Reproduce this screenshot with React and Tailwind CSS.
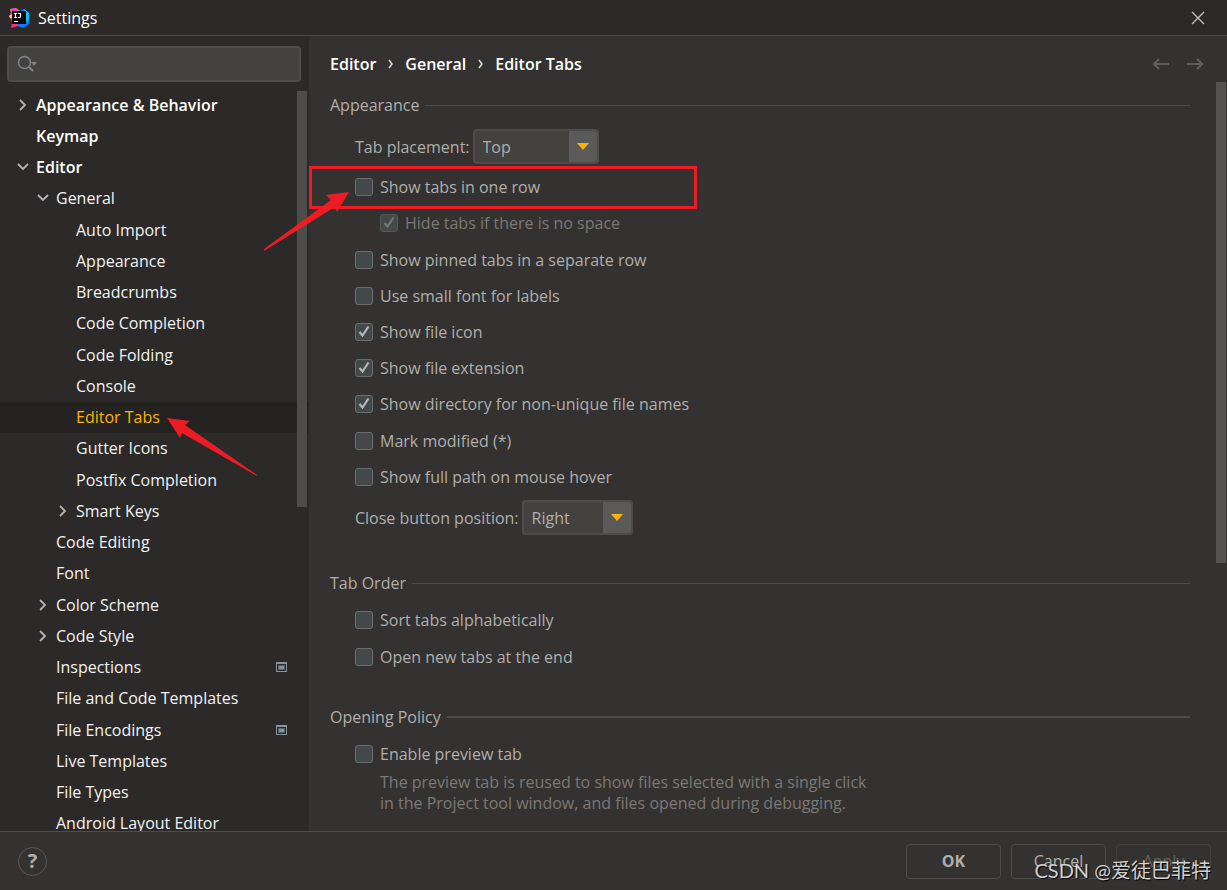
import React from 'react'

const tree = [
  { label: 'Appearance & Behavior', level: 0, arrow: 'right', bold: true },
  { label: 'Keymap', level: 0, bold: true },
  { label: 'Editor', level: 0, arrow: 'down', bold: true },
  { label: 'General', level: 1, arrow: 'down' },
  { label: 'Auto Import', level: 2 },
  { label: 'Appearance', level: 2 },
  { label: 'Breadcrumbs', level: 2 },
  { label: 'Code Completion', level: 2 },
  { label: 'Code Folding', level: 2 },
  { label: 'Console', level: 2 },
  { label: 'Editor Tabs', level: 2, active: true },
  { label: 'Gutter Icons', level: 2 },
  { label: 'Postfix Completion', level: 2 },
  { label: 'Smart Keys', level: 2, arrow: 'right' },
  { label: 'Code Editing', level: 1 },
  { label: 'Font', level: 1 },
  { label: 'Color Scheme', level: 1, arrow: 'right' },
  { label: 'Code Style', level: 1, arrow: 'right' },
  { label: 'Inspections', level: 1, project: true },
  { label: 'File and Code Templates', level: 1 },
  { label: 'File Encodings', level: 1, project: true },
  { label: 'Live Templates', level: 1 },
  { label: 'File Types', level: 1 },
  { label: 'Android Layout Editor', level: 1 },
]

const indent = ['pl-4', 'pl-9', 'pl-14']

const appearance = [
  { label: 'Show tabs in one row', marked: true },
  { label: 'Hide tabs if there is no space', checked: true, disabled: true },
  { label: 'Show pinned tabs in a separate row' },
  { label: 'Use small font for labels' },
  { label: 'Show file icon', checked: true },
  { label: 'Show file extension', checked: true },
  { label: 'Show directory for non-unique file names', checked: true },
  { label: 'Mark modified (*)' },
  { label: 'Show full path on mouse hover' },
]

const Logo = () => (
  <svg width="20" height="20" viewBox="0 0 20 20" aria-hidden="true">
    <path d="M1 1 7 0l4 3v6H0l2-4z" fill="#fd8a2b" />
    <path d="M0 8l3-4 3 8 5 5-5 2-4 1 1-6z" fill="#fe2b78" />
    <path d="M5 0l4 2-1 3H3l-1-3z" fill="#e93be0" />
    <path d="M10 3 15 1l5 4v11l-6 4-6-2z" fill="#087cfa" />
    <path d="M15 1l5 4v7l-4 2z" fill="#07c3f2" />
    <path d="M0 8l3-2v4H1z" fill="#ffd23c" />
    <rect x="3" y="3" width="14" height="13" fill="#0a0204" />
    <path d="M5 5.500h3M6.500 5.500v4M5 9.500h3M9 5.500h2.500v3q0 1-1.200 1H9M5 13.500h4" stroke="#fff" strokeWidth="1.200" fill="none" />
  </svg>
)

const Chevron = ({ dir }) => (
  <svg width="14" height="12" viewBox="0 0 14 12" fill="none" stroke="#b4b4b4" strokeWidth="1.800" aria-hidden="true">
    <path d={dir === 'down' ? 'M2 3l5 5 5-5' : 'M4 1l5 5-5 5'} />
  </svg>
)

const ProjectIcon = () => (
  <svg width="11" height="10" viewBox="0 0 11 10" className="mr-[22px]" aria-hidden="true">
    <path d="M0 0h11v10H0zM1 2v7h9V2z" fill="#87939a" fillRule="evenodd" />
    <rect x="2" y="3" width="7" height="5" fill="#596065" />
    <rect x="3" y="4" width="5" height="3" fill="#87939a" />
  </svg>
)

const TreeItem = ({ item }) => (
  <li className={`flex flex-1 items-center ${indent[item.level]} ${item.active ? 'bg-[#242321]' : ''}`}>
    <span className="flex w-5 shrink-0">{item.arrow && <Chevron dir={item.arrow} />}</span>
    <a
      href="#"
      className={`flex-1 whitespace-nowrap ${item.bold ? 'font-semibold text-white' : ''} ${item.active ? 'text-[#ffb300]' : ''}`}
    >
      {item.label}
    </a>
    {item.project && <ProjectIcon />}
  </li>
)

const Check = ({ label, checked, disabled, marked }) => (
  <label className={`relative flex flex-1 items-center gap-[7px] ${disabled ? 'ml-[25px] text-[#7b7976]' : ''}`}>
    <span className="relative flex">
      <input
        type="checkbox"
        defaultChecked={checked}
        disabled={disabled}
        className={`size-[18px] appearance-none rounded-[3px] border bg-[#43494a] ${disabled ? 'border-[#545657]' : 'border-[#6b6d6d]'}`}
      />
      {checked && (
        <svg width="18" height="18" viewBox="0 0 18 18" fill="none" className="pointer-events-none absolute inset-0" aria-hidden="true">
          <path d="M4.500 9 7.500 12.500l6-9" stroke={disabled ? '#777' : '#b8b8b8'} strokeWidth="2.200" />
        </svg>
      )}
    </span>
    <span>{label}</span>
    {marked && <span className="pointer-events-none absolute -left-[46px] -top-[3px] h-[43px] w-[388px] border-[3px] border-[#ed1c24]" />}
  </label>
)

const Select = ({ id, label, value, width }) => (
  <div className="flex items-center gap-[3px]">
    <label htmlFor={id}>{label}</label>
    <div className={`relative flex h-[35px] ${width}`}>
      <select id={id} className="w-full appearance-none rounded-[4px] border-2 border-[#4e4d4b] bg-[#43423f] pl-2">
        <option>{value}</option>
      </select>
      <span className="pointer-events-none absolute inset-y-[2px] right-[2px] flex w-7 items-center justify-center rounded-r-[3px] bg-[#5a5a5a]">
        <svg width="12" height="7" viewBox="0 0 12 7" aria-hidden="true">
          <path d="M0 0h12L6 7z" fill="#ffb300" />
        </svg>
      </span>
    </div>
  </div>
)

const Heading = ({ children, thick }) => (
  <div className="flex h-6 items-center gap-[6px]">
    <h2>{children}</h2>
    <span className={`flex-1 bg-[#4d4c4a] ${thick ? 'h-[2px]' : 'h-px'}`} />
  </div>
)

const Arrow = ({ dir }) => (
  <svg width="18" height="12" viewBox="0 0 18 12" fill="none" stroke="#5f5e5d" strokeWidth="2.200" aria-hidden="true">
    <path d={dir === 'left' ? 'M17 6H2M7 1 2 6l5 5' : 'M1 6h15M11 1l5 5-5 5'} />
  </svg>
)

const Separator = () => (
  <svg width="5" height="10" viewBox="0 0 5 10" fill="none" stroke="#e0e0e0" strokeWidth="1.500" aria-hidden="true">
    <path d="M1 1l3 4-3 4" />
  </svg>
)

const App = () => {
  return (
    <div className="relative flex h-screen flex-col overflow-hidden bg-[#333230] font-['Open_Sans','Noto_Sans_CJK_SC',sans-serif] text-[16px] leading-6 text-[#b0aeab]">
      <header className="flex h-9 shrink-0 items-center border-b border-[#4e4d4b] bg-[#2b2a28] pl-[9px] pr-[22px] text-white">
        <Logo />
        <h1 className="ml-[9px] flex-1">Settings</h1>
        <button type="button" aria-label="Close">
          <svg width="14" height="14" viewBox="0 0 14 14" stroke="#bdbdbd" strokeWidth="1.400" aria-hidden="true">
            <path d="M1 1l12 12M13 1 1 13" />
          </svg>
        </button>
      </header>

      <div className="flex min-h-0 flex-1">
        <aside className="relative flex w-[309px] shrink-0 flex-col overflow-hidden bg-[#2b2a28] text-[#f2f2f2]">
          <div className="relative ml-[7px] mr-2 mt-[10px] flex h-9 shrink-0">
            <input type="text" aria-label="Search settings" className="w-full rounded-[4px] border-2 border-[#4e4d4b] bg-[#43423f] pl-9" />
            <svg width="22" height="18" viewBox="0 0 22 18" fill="none" className="pointer-events-none absolute left-[10px] top-[9px]" aria-hidden="true">
              <circle cx="7.500" cy="7.500" r="6" stroke="#7d868c" strokeWidth="1.500" />
              <path d="M12 12l4 4" stroke="#7d868c" strokeWidth="2" />
              <path d="M14 7h6l-3 4z" fill="#7d868c" />
            </svg>
          </div>
          <ul className="mt-[7px] flex h-[750px] shrink-0 flex-col">
            {tree.map(item => <TreeItem key={item.label} item={item} />)}
          </ul>
          <span className="absolute right-[2px] top-[55px] h-[416px] w-[10px] bg-[#4d4c4a]" />
        </aside>

        <main className="relative min-w-0 flex-1 overflow-hidden pl-[21px] pr-[37px]">
          <div className="mt-4 flex h-6 items-center justify-between">
            <nav aria-label="Breadcrumb" className="flex items-center gap-3 font-semibold text-white">
              <a href="#">Editor</a>
              <Separator />
              <a href="#">General</a>
              <Separator />
              <a href="#">Editor Tabs</a>
            </nav>
            <div className="-mr-[14px] flex gap-4">
              <button type="button" aria-label="Back"><Arrow dir="left" /></button>
              <button type="button" aria-label="Forward"><Arrow dir="right" /></button>
            </div>
          </div>

          <section className="mt-[17px]">
            <Heading>Appearance</Heading>
            <div className="mt-3 pl-[25px]">
              <Select id="placement" label="Tab placement:" value="Top" width="w-[126px]" />
              <div className="mt-[5px] flex h-[326px] flex-col">
                {appearance.map(item => <Check key={item.label} {...item} />)}
              </div>
              <div className="mt-[5px]">
                <Select id="close" label="Close button position:" value="Right" width="w-[111px]" />
              </div>
            </div>
          </section>

          <section className="mt-9">
            <Heading>Tab Order</Heading>
            <div className="mt-[7px] flex h-[73px] flex-col pl-[25px]">
              <Check label="Sort tabs alphabetically" />
              <Check label="Open new tabs at the end" />
            </div>
          </section>

          <section className="mt-[30px]">
            <Heading thick>Opening Policy</Heading>
            <div className="mt-[7px] flex flex-col pl-[25px]">
              <div className="flex h-9">
                <Check label="Enable preview tab" />
              </div>
              <p className="ml-[25px] leading-[21px] text-[#7b7976]">
                The preview tab is reused to show files selected with a single click
                <br />
                in the Project tool window, and files opened during debugging.
              </p>
            </div>
          </section>
          <span className="absolute right-px top-[46px] h-[481px] w-[10px] bg-[#545351]" />
        </main>
      </div>

      <footer className="flex h-[59px] shrink-0 items-center border-t border-[#4e4d4b] pl-[18px] pr-4">
        <button type="button" aria-label="Help" className="flex size-[29px] items-center justify-center rounded-full border border-[#5a5957] text-[20px] font-bold">?</button>
        <div className="ml-auto flex gap-[10px]">
          <button type="button" className="h-[35px] w-[95px] rounded-[4px] border border-[#4e4d4b] font-bold">OK</button>
          <button type="button" className="h-[35px] w-[95px] rounded-[4px] border border-[#4e4d4b]">Cancel</button>
          <button type="button" disabled className="h-[35px] w-[95px] rounded-[4px] border border-[#434240] text-[#62615f]">Apply</button>
        </div>
      </footer>

      {/* red pointers drawn over the window */}
      <svg width="94" height="62" viewBox="0 0 94 62" className="pointer-events-none absolute left-[260px] top-[190px]" fill="#ed1c24" aria-hidden="true">
        <path d="M89 2 66 5l5 5L4 59v2L75 17l2 5z" />
      </svg>
      <svg width="94" height="62" viewBox="0 0 94 62" className="pointer-events-none absolute left-[165px] top-[416px]" fill="#ed1c24" aria-hidden="true">
        <path d="M2 2l23 3-5 4 72 50v1L17 17l-2 5z" />
      </svg>
      <p className="pointer-events-none absolute bottom-[6px] right-4 font-['Lato','Noto_Sans_CJK_SC',sans-serif] text-[20px] leading-7 text-[#d0d0d0] [text-shadow:1px_1px_1px_#000]">CSDN @爱徒巴菲特</p>
    </div>
  )
}

export default App
